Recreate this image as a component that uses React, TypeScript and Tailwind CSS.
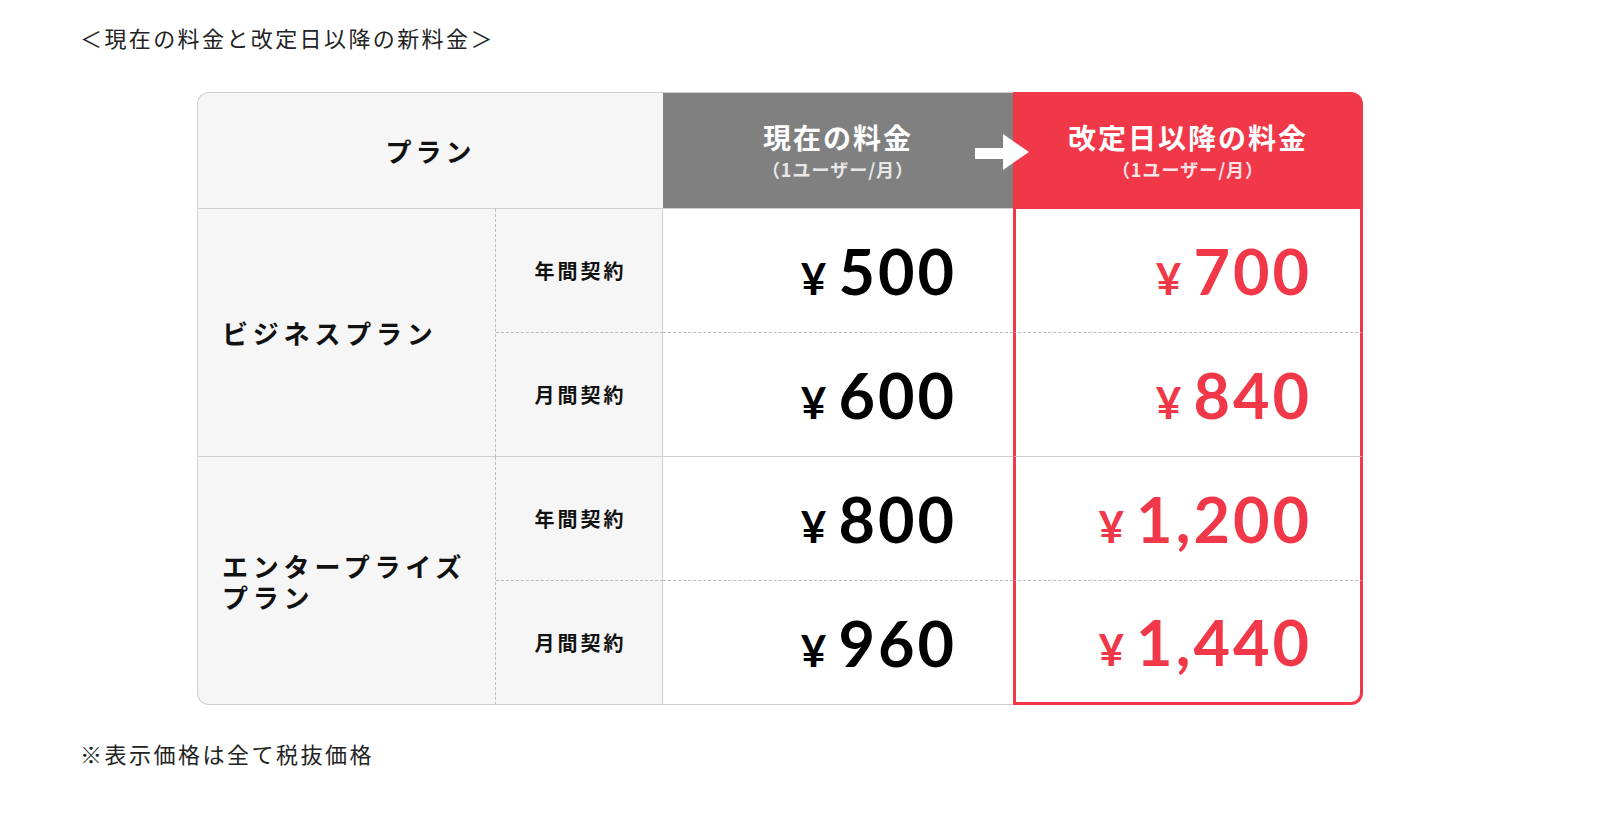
const rows = [
  {
    plan: "ビジネスプラン",
    items: [
      { term: "年間契約", now: "500", next: "700" },
      { term: "月間契約", now: "600", next: "840" },
    ],
  },
  {
    plan: "エンタープライズ\nプラン",
    items: [
      { term: "年間契約", now: "800", next: "1,200" },
      { term: "月間契約", now: "960", next: "1,440" },
    ],
  },
];

function Price({ value, red }: { value: string; red?: boolean }) {
  return (
    <div
      className={
        "flex items-baseline font-['Lato','Noto_Sans_CJK_JP',sans-serif] font-bold leading-none " +
        (red ? "text-[#f03849]" : "text-black")
      }
    >
      <span className="text-[44px]">¥</span>
      <span className="ml-[12px] text-[63px] tracking-[3px]">{value}</span>
    </div>
  );
}

function Arrow() {
  return (
    <svg width="54" height="36" viewBox="0 0 54 36" className="absolute left-[778px] top-[42px]">
      <rect x="0" y="14" width="29" height="11" fill="#fff" />
      <polygon points="28,0 54,18 28,36" fill="#fff" />
    </svg>
  );
}

export default function App() {
  return (
    <div className="min-h-screen bg-white pl-[80px] pt-[24px] font-['Noto_Sans_CJK_JP',sans-serif] text-[#222]">
      <p className="text-[22px] leading-[26px] tracking-[2.4px]">＜現在の料金と改定日以降の新料金＞</p>

      <div className="relative ml-[117px] mt-[42px] grid w-[1166px] grid-cols-[299px_167px_350px_350px] grid-rows-[117px_124px_124px_124px_124px]">
        {/* header */}
        <div className="col-span-2 flex items-center justify-center rounded-tl-xl border-l border-t border-b border-[#cfcfcf] bg-[#f6f6f6] text-[26px] font-bold tracking-[4px] text-[#111]">
          プラン
        </div>
        <div className="flex flex-col items-center justify-center border-t border-b border-[#cfcfcf] bg-[#808080] text-white">
          <div className="text-[28px] font-bold leading-[32px] tracking-[2px]">現在の料金</div>
          <div className="mt-[5px] text-[18px] font-bold leading-[22px] tracking-[1px] text-[#e8e8e8]">（1ユーザー/月）</div>
        </div>
        <div className="flex flex-col items-center justify-center rounded-tr-xl bg-[#f03849] text-white">
          <div className="text-[28px] font-bold leading-[32px] tracking-[2px]">改定日以降の料金</div>
          <div className="mt-[5px] text-[18px] font-bold leading-[22px] tracking-[1px] text-[#fde3e6]">（1ユーザー/月）</div>
        </div>

        {rows.map((g, gi) => {
          const last = gi === rows.length - 1;
          return [
            <div
              key={g.plan}
              className={
                "row-span-2 flex items-center whitespace-pre-line border-l border-b border-r border-[#cfcfcf] border-r-[#bbb] bg-[#f6f6f6] pl-[24px] text-[26px] font-bold leading-[31px] tracking-[4.8px] text-[#111] [border-right-style:dashed] " +
                (last ? "rounded-bl-xl" : "")
              }
              style={{ gridColumn: 1, gridRow: `${2 + gi * 2} / span 2` }}
            >
              {g.plan}
            </div>,
            ...g.items.flatMap((it, ii) => {
              const mid = ii === 0;
              const row = 2 + gi * 2 + ii;
              return [
                <div
                  key={`t${gi}${ii}`}
                  className={
                    "flex items-center justify-center border-r border-b border-[#cfcfcf] bg-[#f6f6f6] pl-[3px] text-[20px] font-bold tracking-[3px] text-[#111] " +
                    (mid ? "border-b-[#bbb] [border-bottom-style:dashed]" : "")
                  }
                  style={{ gridColumn: 2, gridRow: row }}
                >
                  {it.term}
                </div>,
                <div
                  key={`n${gi}${ii}`}
                  className={
                    "flex items-center justify-end border-b bg-white pr-[56px] " +
                    (mid ? "border-dashed border-[#bbb]" : "border-[#cfcfcf]")
                  }
                  style={{ gridColumn: 3, gridRow: row }}
                >
                  <Price value={it.now} />
                </div>,
                <div
                  key={`x${gi}${ii}`}
                  className={
                    "flex items-center justify-end border-x-[3px] border-x-[#f03849] bg-white pr-[48px] " +
                    (mid
                      ? "border-b border-b-[#bbb] [border-bottom-style:dashed]"
                      : last
                        ? "rounded-b-xl rounded-bl-none border-b-[3px] border-b-[#f03849]"
                        : "border-b border-b-[#cfcfcf]")
                  }
                  style={{ gridColumn: 4, gridRow: row }}
                >
                  <Price value={it.next} red />
                </div>,
              ];
            }),
          ];
        })}

        <Arrow />
      </div>

      <p className="mt-[35px] text-[22px] leading-[26px] tracking-[2.5px]">※表示価格は全て税抜価格</p>
    </div>
  );
}
